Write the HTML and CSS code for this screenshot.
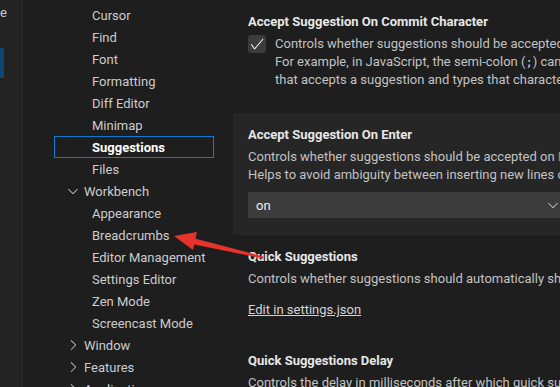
FILE: index.html
```html
<!DOCTYPE html>
<html>
<head>
<meta charset="utf-8">
<title>Settings</title>
<link rel="stylesheet" href="styles.css">
</head>
<body>
<div class="shell">
  <!-- clipped neighbour panel on the far left -->
  <div class="strip">
    <div class="strip-word"><span>Theme</span></div>
    <div class="strip-mark"></div>
  </div>

  <!-- table of contents -->
  <div class="toc">
    <div class="toc-row child">Cursor</div>
    <div class="toc-row child">Find</div>
    <div class="toc-row child">Font</div>
    <div class="toc-row child">Formatting</div>
    <div class="toc-row child">Diff Editor</div>
    <div class="toc-row child">Minimap</div>
    <div class="toc-row child selected">Suggestions</div>
    <div class="toc-row child">Files</div>
    <div class="toc-row group">
      <svg class="chev" width="16" height="16" viewBox="0 0 16 16"><path d="M7.976 10.072l4.357-4.357.62.618L8.284 11h-.618L3 6.333l.619-.618 4.357 4.357z"/></svg>
      Workbench
    </div>
    <div class="toc-row child">Appearance</div>
    <div class="toc-row child">Breadcrumbs</div>
    <div class="toc-row child">Editor Management</div>
    <div class="toc-row child">Settings Editor</div>
    <div class="toc-row child">Zen Mode</div>
    <div class="toc-row child">Screencast Mode</div>
    <div class="toc-row group">
      <svg class="chev" width="16" height="16" viewBox="0 0 16 16"><path d="M10.072 8.024L5.715 3.667l.618-.62L11 7.716v.618L6.333 13l-.618-.619 4.357-4.357z"/></svg>
      Window
    </div>
    <div class="toc-row group">
      <svg class="chev" width="16" height="16" viewBox="0 0 16 16"><path d="M10.072 8.024L5.715 3.667l.618-.62L11 7.716v.618L6.333 13l-.618-.619 4.357-4.357z"/></svg>
      Features
    </div>
    <div class="toc-row group">
      <svg class="chev" width="16" height="16" viewBox="0 0 16 16"><path d="M10.072 8.024L5.715 3.667l.618-.62L11 7.716v.618L6.333 13l-.618-.619 4.357-4.357z"/></svg>
      Application
    </div>
  </div>

  <!-- settings list -->
  <div class="settings">
    <div class="setting first">
      <div class="title">Accept Suggestion On Commit Character</div>
      <div class="check-row">
        <div class="checkbox">
          <svg width="16" height="16" viewBox="0 0 16 16"><path d="M14.431 3.323l-8.47 10-.79-.036-3.35-4.77.818-.574 2.978 4.24 8.051-9.506.764.646z"/></svg>
        </div>
        <div class="desc">
          Controls whether suggestions should be accepted on commit characters.<br>
          For example, in JavaScript, the semi-colon (<code>;</code>) can be a commit character<br>
          that accepts a suggestion and types that character.
        </div>
      </div>
    </div>

    <div class="setting focused">
      <div class="title">Accept Suggestion On Enter</div>
      <div class="desc">
        Controls whether suggestions should be accepted on <code class="key">Enter</code> key, in addition to <code>Tab</code>.<br>
        Helps to avoid ambiguity between inserting new lines or accepting suggestions.
      </div>
      <div class="select">
        <span>on</span>
        <svg class="select-chev" width="16" height="16" viewBox="0 0 16 16"><path d="M7.976 10.072l4.357-4.357.62.618L8.284 11h-.618L3 6.333l.619-.618 4.357 4.357z"/></svg>
      </div>
    </div>

    <div class="setting">
      <div class="title">Quick Suggestions</div>
      <div class="desc">Controls whether suggestions should automatically show up while typing.</div>
      <a class="edit-link" href="#">Edit in settings.json</a>
    </div>

    <div class="setting">
      <div class="title">Quick Suggestions Delay</div>
      <div class="desc">Controls the delay in milliseconds after which quick suggestions will show up.</div>
    </div>
  </div>
</div>

<!-- annotation arrow drawn over the screenshot -->
<svg class="arrow" width="560" height="387" viewBox="0 0 560 387">
  <polygon points="193,238 263.5,256.5 263,258.5 192,244" />
  <polygon points="174,236 197,232 193,250" />
</svg>
</body>
</html>
```

FILE: styles.css
```css
* {
  box-sizing: border-box;
}
body {
  margin: 0;
  width: 560px;
  height: 387px;
  overflow: hidden;
  background-color: #1e1e1e;
  color: #cccccc;
  font-family: Roboto, "Liberation Sans", sans-serif;
  font-size: 13px;
}
.shell {
  display: flex;
  height: 387px;
}

/* far left strip */
.strip {
  width: 23px;
  flex: none;
  background-color: #232323;
  border-right: 1px solid #2c2c2c;
}
.strip-word {
  width: 7px;
  height: 24px;
  display: flex;
  justify-content: flex-end;
  align-items: center;
  overflow: hidden;
  white-space: nowrap;
  color: #cccccc;
}
.strip-mark {
  margin-top: 24px;
  width: 4px;
  height: 30px;
  background-color: #0f4673;
}

/* table of contents */
.toc {
  width: 210px;
  flex: none;
  padding: 4px 0 0 31px;
  overflow: hidden;
}
.toc-row {
  display: flex;
  align-items: center;
  width: 160px;
  height: 22px;
  border: 1px solid transparent;
  white-space: nowrap;
  color: #cccccc;
}
.toc-row.child {
  padding-left: 37px;
}
.toc-row.group {
  padding-left: 10px;
}
.toc-row.selected {
  border-color: #0e7ad1;
  font-weight: bold;
  color: #ffffff;
}
.chev {
  fill: #c5c5c5;
  margin-right: 3px;
  flex: none;
}

/* settings list */
.settings {
  flex: 1;
  min-width: 0;
  overflow: hidden;
}
.setting {
  padding: 13px 0 20px 15px;
  white-space: nowrap;
}
.setting.first {
  padding-bottom: 24px;
}
.setting.focused {
  background-color: #262626;
  padding-bottom: 17px;
}
.title {
  font-weight: bold;
  color: #e7e7e7;
  line-height: 18px;
  margin-bottom: 4px;
}
.desc {
  line-height: 18px;
  color: #c2c2c2;
}
code {
  font-family: "DejaVu Sans Mono", monospace;
  font-size: 12px;
  color: #d0d0d0;
}
code.key {
  font-family: inherit;
  font-size: 13px;
  color: #e07a4c;
}
.check-row {
  display: flex;
  align-items: flex-start;
}
.checkbox {
  width: 18px;
  height: 18px;
  flex: none;
  margin-right: 9px;
  border-radius: 3px;
  background-color: #3c3c3c;
  display: flex;
  align-items: center;
  justify-content: center;
}
.checkbox svg {
  fill: #ffffff;
}
.select {
  margin-top: 8px;
  width: 320px;
  height: 26px;
  background-color: #3c3c3c;
  display: flex;
  align-items: center;
  justify-content: space-between;
  padding: 0 7px 0 8px;
  color: #f0f0f0;
}
.select-chev {
  fill: #c5c5c5;
}
.edit-link {
  display: inline-block;
  margin-top: 13px;
  line-height: 18px;
  color: #d4d4d4;
  text-decoration: underline;
}

/* annotation */
.arrow {
  position: absolute;
  left: 0;
  top: 0;
  pointer-events: none;
  fill: #e8322c;
}
```
